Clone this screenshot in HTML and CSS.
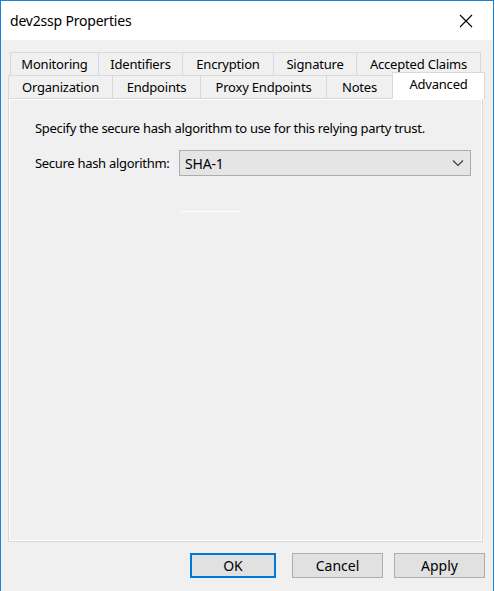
FILE: index.html
```html
<!DOCTYPE html>
<html lang="en">
<head>
    <meta charset="UTF-8">
    <meta name="viewport" content="width=device-width, initial-scale=1.0">
    <title>dev2ssp Properties</title>
    <link rel="stylesheet" href="styles.css">
</head>
<body>
    <div class="window">
        <header class="title-bar">
            <span class="title">dev2ssp Properties</span>
            <button class="close-button" aria-label="Close">
                <svg width="14" height="14" viewBox="0 0 14 14">
                    <path d="M1 1 L13 13 M13 1 L1 13" stroke="#000" stroke-width="1.1" fill="none"/>
                </svg>
            </button>
        </header>

        <div class="dialog-body">
            <div class="tabs">
                <div class="tab-row tab-row-back">
                    <div class="tab">Monitoring</div>
                    <div class="tab">Identifiers</div>
                    <div class="tab">Encryption</div>
                    <div class="tab">Signature</div>
                    <div class="tab">Accepted Claims</div>
                </div>
                <div class="tab-row tab-row-front">
                    <div class="tab">Organization</div>
                    <div class="tab">Endpoints</div>
                    <div class="tab">Proxy Endpoints</div>
                    <div class="tab">Notes</div>
                    <div class="tab active">Advanced</div>
                </div>
            </div>

            <div class="tab-panel">
                <p class="hint">Specify the secure hash algorithm to use for this relying party trust.</p>
                <div class="field">
                    <label class="field-label">Secure hash algorithm:</label>
                    <div class="select">
                        <span>SHA-1</span>
                        <svg width="12" height="8" viewBox="0 0 12 8">
                            <path d="M1 1.5 L6 6.5 L11 1.5" stroke="#3c3c3c" stroke-width="1.2" fill="none"/>
                        </svg>
                    </div>
                </div>
                <div class="stray-line"></div>
            </div>

            <div class="actions">
                <button class="btn default">OK</button>
                <button class="btn">Cancel</button>
                <button class="btn">Apply</button>
            </div>
        </div>
    </div>
</body>
</html>
```

FILE: styles.css
```css
body {
    margin: 0;
    padding: 0;
    background: #ffffff;
    font-family: "Noto Sans", "Open Sans", sans-serif;
    color: #000;
}
.window {
    width: 492px;
    height: 590px;
    border: 1px solid #1883d7;
    border-bottom: none;
    display: flex;
    flex-direction: column;
    background: #f0f0f0;
}
.title-bar {
    height: 39px;
    background: #ffffff;
    display: flex;
    justify-content: space-between;
    align-items: center;
    padding: 0 0 0 9px;
}
.title {
    font-size: 14px;
    letter-spacing: -0.2px;
    margin-top: -1px;
}
.close-button {
    width: 46px;
    height: 39px;
    border: none;
    background: none;
    padding: 0;
    display: flex;
    align-items: center;
    justify-content: center;
    margin-right: 4px;
}
.dialog-body {
    flex: 1;
    display: flex;
    flex-direction: column;
    padding: 12px 10px 0 7px;
}
.tabs {
    font-size: 13px;
    position: relative;
    z-index: 1;
}
.tab-row {
    display: grid;
    height: 23px;
}
.tab-row-back {
    grid-template-columns: 89px 84px 91px 83px 124px;
    margin-left: 2px;
}
.tab-row-front {
    grid-template-columns: 105px 88px 126px 66px 90px;
}
.tab {
    border: 1px solid #d9d9d9;
    border-bottom: none;
    border-left: none;
    display: flex;
    align-items: center;
    justify-content: center;
    background: #f0f0f0;
    color: #000;
    letter-spacing: -0.2px;
}
.tab:first-child {
    border-left: 1px solid #d9d9d9;
}
.tab-row-front .tab {
    height: 23px;
    padding-bottom: 1px;
    box-sizing: border-box;
}
.tab.active {
    background: #ffffff;
    height: 27px;
    margin-top: -3px;
    margin-left: -1px;
    margin-right: -2px;
    border: 1px solid #d9d9d9;
    border-bottom: none;
    padding-bottom: 4px;
}
.tab-panel {
    height: 444px;
    box-sizing: border-box;
    border: 1px solid #d9d9d9;
    box-shadow: inset 0 0 0 1px #ffffff;
    background: #f0f0f0;
    padding: 14px 10px 0 26px;
    font-size: 13px;
    letter-spacing: -0.3px;
}
.hint {
    margin: 6px 0 0;
}
.field {
    display: flex;
    align-items: center;
    margin-top: 13px;
}
.field-label {
    width: 144px;
}
.select {
    width: 292px;
    height: 26px;
    box-sizing: border-box;
    border: 1px solid #adadad;
    background: #e5e5e5;
    display: flex;
    align-items: center;
    justify-content: space-between;
    padding: 0 6px 0 5px;
    font-size: 14px;
    letter-spacing: -0.2px;
}
.stray-line {
    width: 60px;
    height: 1px;
    background: #ffffff;
    margin: 35px 0 0 146px;
}
.actions {
    display: flex;
    justify-content: flex-end;
    gap: 11px;
    margin-top: 11px;
    margin-right: -2px;
}
.btn {
    width: 91px;
    height: 25px;
    border: 1px solid #adadad;
    background: #e1e1e1;
    font-family: inherit;
    font-size: 14px;
    color: #000;
    padding: 0;
}
.btn.default {
    width: 86px;
    border: 2px solid #0078d7;
    margin-right: 5px;
}
```
